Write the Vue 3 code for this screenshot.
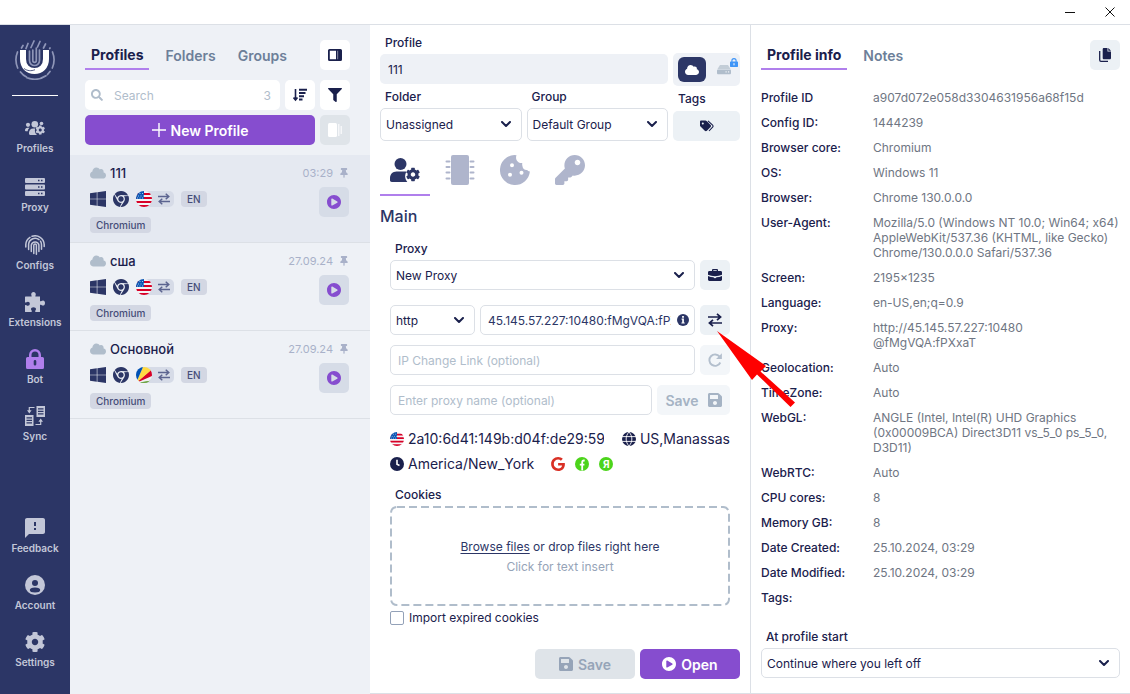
<template>
    <svg class="sprite" aria-hidden="true">
        <symbol id="i-cloud" viewBox="0 32 640 448"><path d="M537.6 226.6c4.1-10.7 6.4-22.4 6.4-34.6 0-53-43-96-96-96-19.7 0-38.1 6-53.3 16.2C367 64.2 315.3 32 256 32c-88.4 0-160 71.6-160 160 0 2.7.1 5.4.2 8.1C40.2 219.8 0 273.2 0 336c0 79.5 64.5 144 144 144h368c70.7 0 128-57.3 128-128 0-61.9-44-113.6-102.4-125.4z" /></symbol>
        <symbol id="i-search" viewBox="0 0 512 512"><path d="M505 442.7L405.3 343c-4.5-4.5-10.6-7-17-7H372c27.6-35.3 44-79.7 44-128C416 93.1 322.9 0 208 0S0 93.1 0 208s93.1 208 208 208c48.3 0 92.7-16.4 128-44v16.3c0 6.4 2.5 12.5 7 17l99.7 99.7c9.4 9.4 24.6 9.4 33.9 0l28.3-28.3c9.4-9.4 9.4-24.6.1-34zM208 336c-70.7 0-128-57.2-128-128 0-70.7 57.2-128 128-128 70.7 0 128 57.2 128 128 0 70.7-57.2 128-128 128z" /></symbol>
        <symbol id="i-filter" viewBox="0 0 512 512"><path d="M487.976 0H24.028C2.71 0-8.047 25.866 7.058 40.971L192 225.941V432c0 7.831 3.821 15.17 10.237 19.662l80 55.98C298.02 518.69 320 507.493 320 487.98V225.941l184.947-184.97C520.021 25.896 509.338 0 487.976 0z" /></symbol>
        <symbol id="i-sort" viewBox="0 0 14 14"><path d="M2.5 1v11M.5 9.5l2 2.5 2-2.5" fill="none" stroke="currentColor" stroke-width="1.6" /><path d="M6 .8h8v2H6zM6 4h6.500v2H6zM6 7.200h5v2H6zM6 10.400h3.500v2H6z" /></symbol>
        <symbol id="i-panel" viewBox="0 0 14 12"><path fill-rule="evenodd" d="M1.500 0h11A1.500 1.500 0 0 1 14 1.500v9a1.500 1.500 0 0 1-1.500 1.500h-11A1.500 1.500 0 0 1 0 10.500v-9A1.500 1.500 0 0 1 1.500 0zM1.800 1.800v8.400H8V1.800z" /><path d="M9 1.800h1.200v8.400H9z" fill="#fff" opacity=".4" /></symbol>
        <symbol id="i-stack" viewBox="0 0 14 14"><rect width="9" height="14" rx="1.500" /><rect x="10" y="1" width="1.500" height="12" opacity=".7" /><rect x="12.500" y="3" width="1.500" height="8" opacity=".7" /></symbol>
        <symbol id="i-plus" viewBox="0 0 14 14"><path d="M7 0v14M0 7h14" stroke="currentColor" stroke-width="1.4" /></symbol>
        <symbol id="i-play" viewBox="8 8 496 496"><path d="M256 8C119 8 8 119 8 256s111 248 248 248 248-111 248-248S393 8 256 8zm115.700 272l-176 101c-15.800 8.800-35.700-2.500-35.700-21V152c0-18.400 19.800-29.800 35.700-21l176 107c16.400 9.200 16.400 32.900 0 42z" /></symbol>
        <symbol id="i-pin" viewBox="0 0 384 512"><path d="M298 214L286 96h42c13 0 24-11 24-24V24c0-13-11-24-24-24H56C43 0 32 11 32 24v48c0 13 11 24 24 24h42L86 214C37 237 0 277 0 328c0 13 11 24 24 24h136v104l25 52c3 6 11 6 14 0l25-52V352h136c13 0 24-11 24-24 0-51-38-91-86-114z" /></symbol>
        <symbol id="i-windows" viewBox="0 32 448 448"><path d="M0 93.700l190-27v181H0V93.700zm0 324.600l190 26V264H0v154.300zm206 28L448 480V264H206v182zm0-380.600v182H448V32L206 65.700z" /></symbol>
        <symbol id="i-chrome" viewBox="0 8 496 496"><path d="M131.5 217.5L55.1 100.1c47.6-59.2 119-91.8 192-92.1 42.3-.3 85.5 10.5 124.8 33.2 43.4 25.2 76.4 61.4 97.4 103L264 133.4c-58.1-3.4-113.4 29.3-132.5 84.1zm32.9 38.5c0 46.2 37.4 83.6 83.6 83.6s83.6-37.4 83.6-83.6-37.4-83.6-83.6-83.6-83.6 37.3-83.6 83.6zm314.9-89.2L339.6 174c37.9 44.3 38.5 108.2 6.6 157.2L234.1 503.6c46.5 2.5 94.4-7.7 137.8-32.9 107.4-62 150.9-192 107.4-303.9zM133.7 303.6L40.4 120.1C14.9 159.1 0 205.9 0 256c0 124 90.8 226.7 209.5 244.9l63.7-124.8c-57.6 10.8-113.2-20.8-139.5-72.5z" /></symbol>
        <symbol id="i-swap" viewBox="0 0 14 14"><path d="M0 4h12M9 .8L12.600 4 9 7.200M14 10H2M5 6.800L1.400 10 5 13.200" fill="none" stroke="currentColor" stroke-width="1.700" /></symbol>
        <symbol id="i-us" viewBox="0 0 16 16"><path fill="#f4f4f6" d="M0 0h16v16H0z" /><path fill="#d80027" d="M0 2h16v2H0zM0 6h16v2H0zM0 10h16v2H0zM0 14h16v2H0z" /><path fill="#0b57b5" d="M0 0h8v8H0z" /><path stroke="#cfe0f2" stroke-dasharray="1 1.500" d="M1 2.500h7M2 5h6M1 7h7" stroke-width=".8" /></symbol>
        <symbol id="i-sc" viewBox="0 0 16 16"><path fill="#6da544" d="M0 16h16v-3z" /><path fill="#f0f0f0" d="M0 16l16-2.500V8z" /><path fill="#6da544" d="M0 16h16v-2.500z" /><path fill="#d80027" d="M0 16L16 9V2z" /><path fill="#ffda44" d="M0 16L16 2.500V0H7z" /><path fill="#0052b4" d="M0 16L7 0H0z" /></symbol>
        <symbol id="i-cog" viewBox="8 8 496 496"><path d="M487.4 315.7l-42.6-24.6c4.3-23.2 4.3-47 0-70.2l42.6-24.6c4.9-2.8 7.1-8.6 5.5-14-11.1-35.6-30-67.8-54.7-94.6-3.8-4.1-10-5.1-14.8-2.3L380.8 110c-17.9-15.400-38.500-27.300-60.800-35.100V25.800c0-5.600-3.900-10.500-9.400-11.700-36.700-8.200-74.300-7.800-109.200 0-5.500 1.200-9.400 6.100-9.400 11.700V75c-22.200 7.900-42.800 19.800-60.800 35.100L88.700 85.500c-4.900-2.800-11-1.900-14.800 2.300-24.700 26.700-43.600 58.900-54.700 94.600-1.700 5.400.6 11.200 5.500 14L67.300 221c-4.300 23.200-4.300 47 0 70.200l-42.600 24.600c-4.900 2.800-7.100 8.600-5.500 14 11.100 35.600 30 67.800 54.700 94.600 3.800 4.100 10 5.100 14.800 2.300l42.600-24.600c17.900 15.400 38.500 27.300 60.800 35.100v49.200c0 5.600 3.900 10.500 9.400 11.700 36.700 8.200 74.300 7.800 109.200 0 5.500-1.200 9.400-6.100 9.400-11.700v-49.200c22.200-7.900 42.800-19.800 60.800-35.100l42.600 24.600c4.900 2.800 11 1.900 14.800-2.300 24.700-26.700 43.600-58.900 54.700-94.600 1.500-5.500-.7-11.300-5.600-14.100zM256 336c-44.100 0-80-35.900-80-80s35.900-80 80-80 80 35.900 80 80-35.900 80-80 80z" /></symbol>
        <symbol id="i-users" viewBox="0 0 20 17"><circle cx="3" cy="3.800" r="2.100" /><circle cx="9.800" cy="3.300" r="3.300" /><circle cx="16.500" cy="2.500" r="1.800" /><path d="M0 9.500C0 7.800 1 6.800 2.500 6.800h2C3.200 8 2.800 9.200 2.700 10.300H.8C.3 10.300 0 10 0 9.500zM4 12c0-2.800 1.600-4.600 4.200-4.600h2c-.8 2.500-.1 4.900 1.800 6.500H5.200C4.400 13.900 4 13.500 4 12.800z" /><use href="#i-cog" x="10.500" y="4.300" width="9.500" height="9.500" /></symbol>
        <symbol id="i-user-cog" viewBox="0 0 30 24"><circle cx="10.500" cy="6" r="6" /><path d="M6.500 13.500h8c.8 0 1.200.1 2 .3-1.800 2.700-2 6.500.8 10.200H1.800C.7 24 0 23.300 0 22.300V20c0-3.700 2.800-6.500 6.500-6.500z" /><use href="#i-cog" x="16" y="9.500" width="14" height="14" /></symbol>
        <symbol id="i-server" viewBox="0 0 20 19"><path fill-rule="evenodd" d="M1 0h18a1 1 0 0 1 1 1v3a1 1 0 0 1-1 1H1a1 1 0 0 1-1-1V1a1 1 0 0 1 1-1zm12 1.800v1.400h1.500V1.800zm3 0v1.400h1.500V1.800zM1 6.500h18a1 1 0 0 1 1 1v3a1 1 0 0 1-1 1H1a1 1 0 0 1-1-1v-3a1 1 0 0 1 1-1zm12 1.800v1.400h1.500V8.300zm3 0v1.400h1.500V8.300zM1 13h18a1 1 0 0 1 1 1v3a1 1 0 0 1-1 1H1a1 1 0 0 1-1-1v-3a1 1 0 0 1 1-1zm12 1.800v1.400h1.500v-1.400zm3 0v1.400h1.500v-1.400z" /></symbol>
        <symbol id="i-finger" viewBox="0 0 20 20"><path fill="none" stroke="currentColor" stroke-width="1.500" stroke-linecap="round" d="M.8 12V9.500A9 9 0 0 1 5 2.300M7 1.300a9.200 9.200 0 0 1 12.200 8.200v2M3.600 14.500V9.800A6.500 6.500 0 0 1 14 4.600M15.500 6.200c.7 1.100 1 2.200 1 3.600v4.500M6.300 16.500V10a3.900 3.900 0 0 1 7.600 0v6.500M8.800 18.500v-8.300a1.300 1.300 0 0 1 2.600 0v9" /></symbol>
        <symbol id="i-puzzle" viewBox="0 0 20 20"><path d="M6.500 4.500C7 4.200 6.200 3.500 6.200 2.300 6.200 1 7.100 0 8.500 0s2.300 1 2.300 2.300c0 1.200-.8 1.900-.3 2.200H15V9c.3.500 1 .4 1.400 0 .5-.4 1-.6 1.600-.6 1.200 0 2 1 2 2.600s-.8 2.600-2 2.600c-.6 0-1.100-.2-1.600-.6-.4-.4-1.100-.5-1.400 0v6.400c0 .4-.2.600-.6.600h-3.900c-.5-.4-.4-1-.1-1.400.4-.5.600-.9.600-1.500 0-1.200-1.100-1.900-2.500-1.900s-2.500.7-2.500 1.900c0 .6.2 1 .6 1.500.3.400.4 1-.1 1.400H.6c-.4 0-.6-.2-.6-.6v-6c.5-.5 1-.4 1.400-.1.500.4.900.5 1.500.5 1.200 0 1.900-.8 1.900-2s-.7-2-1.900-2c-.6 0-1 .2-1.500.5-.4.300-.9.400-1.400-.1V5.100c0-.4.2-.6.600-.6z" /></symbol>
        <symbol id="i-lock" viewBox="0 0 18 20"><path fill-rule="evenodd" d="M1.500 8H3V6a6 6 0 0 1 12 0v2h1.500A1.500 1.500 0 0 1 18 9.500v9a1.500 1.500 0 0 1-1.500 1.500h-15A1.500 1.500 0 0 1 0 18.500v-9A1.500 1.500 0 0 1 1.500 8zM5.500 8h7V6a3.500 3.500 0 0 0-7 0zM9 11a1.300 1.300 0 0 0-1.300 1.300v3a1.300 1.300 0 0 0 2.600 0v-3A1.300 1.300 0 0 0 9 11z" /></symbol>
        <symbol id="i-sync" viewBox="0 0 20 20"><path fill-rule="evenodd" d="M11.500 0H20v11h-8.500zM13 2.300v1.200h5.500V2.300zm0 2.500V6h5.500V4.800zm0 2.500v1.200h5.500V7.300zM0 9h8.500v11H0zm1.500 2.300v1.200H7v-1.200zm0 2.500V15H7v-1.200zm0 2.500v1.200H7v-1.200z" /><path fill="none" stroke="currentColor" stroke-width="1.200" d="M9.500 1.500H4.300V6M10.500 18.500h5.200V14" /><path d="M2 4.200h4.600L4.300 7.500zM13.400 15.800H18l-2.300-3.300z" /></symbol>
        <symbol id="i-feedback" viewBox="2 2 20 20"><path d="M20 2H4c-1.100 0-1.990.9-1.990 2L2 22l4-4h14c1.100 0 2-.9 2-2V4c0-1.100-.9-2-2-2zm-7 12h-2v-2h2v2zm0-4h-2V6h2v4z" /></symbol>
        <symbol id="i-account" viewBox="0 0 20 20"><circle cx="10" cy="10" r="10" /><circle cx="10" cy="8" r="3" fill="#2c3666" /><ellipse cx="10" cy="15" rx="5.200" ry="2.500" fill="#2c3666" /></symbol>
        <symbol id="i-chip" viewBox="0 0 30 30"><rect x="6" width="18" height="30" rx="2" /><path stroke="currentColor" stroke-width="2" stroke-linecap="round" d="M1.500 6.500h3M1.500 12h3M1.500 17.500h3M1.500 23.500h3M25.500 6.500h3M25.500 12h3M25.500 17.500h3M25.500 23.500h3" /></symbol>
        <symbol id="i-cookie" viewBox="0 0 30 30"><path fill-rule="evenodd" d="M14.500 0a15 15 0 1 0 15.400 16.500c-1.500-.2-2.200-.7-2.700-1.500-2.500.3-4.600-1.200-4.700-3.700-.3-.9-.5-2.100-.2-3.300-1.800.3-3.400-.2-4.600-1.500C16.100 5 15.600 2.300 16.500.200zM12 8.200a2 2 0 1 1 0 4 2 2 0 0 1 0-4zm9.500 7.500a2 2 0 1 1 0 4 2 2 0 0 1 0-4zM10 17.800a2 2 0 1 1 0 4 2 2 0 0 1 0-4z" /></symbol>
        <symbol id="i-key" viewBox="0 0 512 512"><path d="M512 176.001C512 273.203 433.202 352 336 352c-11.220 0-22.190-1.062-32.827-3.069l-24.012 27.014A23.999 23.999 0 0 1 261.223 384H224v40c0 13.255-10.745 24-24 24h-40v40c0 13.255-10.745 24-24 24H24c-13.255 0-24-10.745-24-24v-78.059c0-6.365 2.529-12.470 7.029-16.971l161.802-161.802C163.108 213.814 160 195.271 160 176 160 78.798 238.797.001 335.999 0 433.488-.001 512 78.511 512 176.001zM336 128c0 26.510 21.490 48 48 48s48-21.490 48-48-21.490-48-48-48-48 21.490-48 48z" /></symbol>
        <symbol id="i-drive" viewBox="0 0 14 10"><path d="M3 0h8l2.500 4H.5z" opacity=".7" /><path fill-rule="evenodd" d="M1.300 4.600h11.400c.8 0 1.300.5 1.300 1.300v2c0 .8-.5 1.300-1.300 1.300H1.300C.5 9.200 0 8.700 0 7.900v-2c0-.8.500-1.300 1.300-1.300zM8.500 6.300v1.200h1.200V6.300zm2.500 0v1.200h1.200V6.300z" /></symbol>
        <symbol id="i-tags" viewBox="0 0 14 12"><path fill-rule="evenodd" d="M1.200.5h4.300c.4 0 .8.2 1.100.500l4 4c.6.600.6 1.500 0 2.100l-3.700 3.700c-.6.600-1.500.6-2.100 0L.5 6.500C.2 6.200 0 5.800 0 5.400V1.700C0 1 .5.500 1.200.5zM2.800 2.400a1 1 0 1 0 0 2 1 1 0 0 0 0-2z" /><path fill="none" stroke="currentColor" stroke-width="1.100" d="M8 .9l4.600 4.300c.6.600.6 1.300 0 1.900L9 11" /></symbol>
        <symbol id="i-chevron" viewBox="0 0 10 7"><path fill="none" stroke="currentColor" stroke-width="2" stroke-linejoin="round" stroke-linecap="round" d="M1 1l4 4 4-4" /></symbol>
        <symbol id="i-case" viewBox="0 0 14 12"><path fill-rule="evenodd" d="M4 2V1.200C4 .5 4.500 0 5.200 0h3.600c.7 0 1.200.5 1.200 1.200V2h2.600c.8 0 1.400.6 1.400 1.400v2.400c-4 1.900-10 1.900-14 0V3.400C0 2.600.6 2 1.400 2zm1.300 0h3.400v-.7H5.300zM0 7c1.700.8 3.500 1.200 5.500 1.300.2.700.7 1 1.500 1s1.300-.3 1.500-1c2-.1 3.800-.5 5.500-1.300v3.600c0 .8-.6 1.400-1.400 1.400H1.400C.6 12 0 11.400 0 10.600z" /></symbol>
        <symbol id="i-info" viewBox="0 0 12 12"><circle cx="6" cy="6" r="6" /><path fill="#fff" d="M5.100 2h1.800v1.700H5.100zM4.600 4.600h2.300v3.800h.8v1.100H4.400V8.400h.8V5.700h-.6z" /></symbol>
        <symbol id="i-redo" viewBox="0 0 14 14"><path fill="none" stroke="currentColor" stroke-width="1.900" d="M12.300 9.500A5.700 5.700 0 1 1 11.600 3.600" /><path d="M13.900.3v5.800H8.100z" /></symbol>
        <symbol id="i-save" viewBox="0 32 448 448"><path d="M433.941 129.941l-83.882-83.882A48 48 0 0 0 316.118 32H48C21.490 32 0 53.490 0 80v352c0 26.510 21.490 48 48 48h352c26.510 0 48-21.490 48-48V163.882a48 48 0 0 0-14.059-33.941zM224 416c-35.346 0-64-28.654-64-64 0-35.346 28.654-64 64-64s64 28.654 64 64c0 35.346-28.654 64-64 64zm96-304.520V212c0 6.627-5.373 12-12 12H76c-6.627 0-12-5.373-12-12V108c0-6.627 5.373-12 12-12h228.520c3.183 0 6.235 1.264 8.485 3.515l3.480 3.480A11.996 11.996 0 0 1 320 111.480z" /></symbol>
        <symbol id="i-globe" viewBox="0 0 14 14"><circle cx="7" cy="7" r="7" /><path fill="none" stroke="#fff" stroke-width=".9" d="M0 4.600h14M0 9.400h14M7 0C3.200 4 3.200 10 7 14c3.800-4 3.800-10 0-14z" /></symbol>
        <symbol id="i-clock" viewBox="0 0 14 14"><circle cx="7" cy="7" r="7" /><path fill="none" stroke="#fff" stroke-width="1.600" d="M7 2.800v4.500l2.500 1.200" /></symbol>
        <symbol id="i-google" viewBox="0 8 488 496"><path d="M488 261.800C488 403.300 391.100 504 248 504 110.800 504 0 393.200 0 256S110.800 8 248 8c66.800 0 123 24.500 166.300 64.900l-67.500 64.900C258.500 52.600 94.300 116.600 94.300 256c0 86.500 69.100 156.600 153.700 156.600 98.200 0 135-70.400 140.800-106.900H248v-85.300h236.100c2.300 12.700 3.900 24.900 3.900 41.400z" /></symbol>
        <symbol id="i-facebook" viewBox="0 0 14 14"><circle cx="7" cy="7" r="7" /><path fill="none" stroke="#fff" stroke-width="1.800" d="M9.700 3.500H8.800C7.700 3.500 7.200 4 7.200 5v8.500M4.800 7.700h4.600" /></symbol>
        <symbol id="i-copy" viewBox="0 0 12 14"><path d="M5 0h3.500v3.500H12V10c0 .8-.5 1.300-1.300 1.300H5c-.8 0-1.300-.5-1.300-1.300V1.300C3.700.5 4.200 0 5 0zM9.300 0L12 2.700H9.300z" /><path fill="none" stroke="currentColor" stroke-width="1.300" d="M.7 3v9c0 .8.4 1.300 1.300 1.300h7" /></symbol>
        <symbol id="i-logo" viewBox="0 0 40 40">
            <g fill="none" stroke="#8f96b8" stroke-width="1.700" stroke-linecap="round">
                <path d="M2.500 12c-2 5-2 11 .2 16M37.500 12c2 5 2 11-.2 16M5.500 32c1.500 2 3.500 3.800 6 5M12 37.800c6 2.200 13 2 19-2M32.500 34.500l2.500-3M8 5.500L6.500 8M13 3.500L11 8.500M19 1l-3 6.500M25 1.500l-2.500 5.500M30.500 4L28.500 8M35 8l-.3.500" />
                <path d="M14.500 11v9.500a5 5 0 0 0 10 0V10M17.800 10v10.500c0 2.400 3.500 2.400 3.500 0V8" />
            </g>
            <path fill="none" stroke="#fff" stroke-width="6" d="M8 10v9c0 7.500 5 12 11.500 12S31 26.500 31 19v-9" />
            <path fill="none" stroke="#2c3666" stroke-width=".8" d="M9 28.500c3.500 2.500 7 2.800 11 1.200" />
        </symbol>
    </svg>

    <div class="app">
        <header class="titlebar">
            <button aria-label="Minimize">
                <svg class="i10" viewBox="0 0 10 10"><path d="M0 5.500h10" stroke="currentColor" /></svg>
            </button>
            <button aria-label="Close">
                <svg class="i10" viewBox="0 0 10 10"><path d="M.5.5l9 9M9.500.5l-9 9" stroke="currentColor" /></svg>
            </button>
        </header>

        <div class="body">
            <nav class="sidebar">
                <svg class="logo"><use href="#i-logo" /></svg>
                <div class="divider"></div>
                <a v-for="item in navTop" :key="item.label" href="#" class="nav-item" :class="item.icon">
                    <svg class="nav-icon"><use :href="'#i-' + item.icon" /></svg>
                    {{ item.label }}
                </a>
                <div class="spacer"></div>
                <a v-for="item in navBottom" :key="item.label" href="#" class="nav-item">
                    <svg class="nav-icon"><use :href="'#i-' + item.icon" /></svg>
                    {{ item.label }}
                </a>
            </nav>

            <section class="list">
                <div class="list-head">
                    <div class="tabs">
                        <button class="tab active">Profiles</button>
                        <button class="tab">Folders</button>
                        <button class="tab">Groups</button>
                        <div class="spacer"></div>
                        <button class="square white" aria-label="Toggle panel"><svg class="i14"><use href="#i-panel" /></svg></button>
                    </div>
                    <div class="row">
                        <label class="search">
                            <svg class="i12"><use href="#i-search" /></svg>
                            <input v-model="search" type="text" placeholder="Search" aria-label="Search">
                            <span>3</span>
                        </label>
                        <button class="square white" aria-label="Sort"><svg class="i14"><use href="#i-sort" /></svg></button>
                        <button class="square white" aria-label="Filter"><svg class="i14"><use href="#i-filter" /></svg></button>
                    </div>
                    <div class="row">
                        <button class="btn primary grow"><svg class="i14"><use href="#i-plus" /></svg>New Profile</button>
                        <button class="square disabled" aria-label="Bulk create" disabled><svg class="i14"><use href="#i-stack" /></svg></button>
                    </div>
                </div>

                <article v-for="(p, i) in profiles" :key="p.name" class="profile" :class="{ selected: i === 0 }">
                    <div class="profile-top">
                        <svg class="cloud"><use href="#i-cloud" /></svg>
                        <span class="name">{{ p.name }}</span>
                        <span class="date">{{ p.date }}</span>
                        <svg class="pin"><use href="#i-pin" /></svg>
                    </div>
                    <div class="profile-bottom">
                        <div class="marks">
                            <div class="badges">
                                <svg class="i16"><use href="#i-windows" /></svg>
                                <svg class="i16"><use href="#i-chrome" /></svg>
                                <span class="proxy-badge">
                                    <svg class="flag i16"><use :href="'#i-' + p.flag" /></svg>
                                    <svg class="i12"><use href="#i-swap" /></svg>
                                </span>
                                <span class="chip">EN</span>
                            </div>
                            <span class="chip">Chromium</span>
                        </div>
                        <button class="square play" aria-label="Run profile"><svg class="i14"><use href="#i-play" /></svg></button>
                    </div>
                </article>
            </section>

            <main class="editor">
                <div class="top">
                    <div class="top-left">
                        <label class="label" for="profile-name">Profile</label>
                        <input id="profile-name" v-model="profileName" class="name-input" type="text">
                        <div class="pair">
                            <div>
                                <label class="label" for="folder">Folder</label>
                                <div class="select tall">
                                    <select id="folder"><option>Unassigned</option></select>
                                    <svg class="chevron"><use href="#i-chevron" /></svg>
                                </div>
                            </div>
                            <div>
                                <label class="label" for="group">Group</label>
                                <div class="select tall">
                                    <select id="group"><option>Default Group</option></select>
                                    <svg class="chevron"><use href="#i-chevron" /></svg>
                                </div>
                            </div>
                        </div>
                    </div>
                    <div class="top-right">
                        <div class="storage">
                            <button class="storage-on" aria-label="Cloud storage"><svg class="i14"><use href="#i-cloud" /></svg></button>
                            <button class="storage-off" aria-label="Local storage">
                                <svg class="i14"><use href="#i-drive" /></svg>
                                <svg class="lock"><use href="#i-lock" /></svg>
                            </button>
                        </div>
                        <span class="label">Tags</span>
                        <button class="tags" aria-label="Tags"><svg class="i14"><use href="#i-tags" /></svg></button>
                    </div>
                </div>

                <div class="icon-tabs">
                    <button class="active" aria-label="Main"><svg><use href="#i-user-cog" /></svg></button>
                    <button aria-label="Hardware"><svg><use href="#i-chip" /></svg></button>
                    <button aria-label="Cookies"><svg><use href="#i-cookie" /></svg></button>
                    <button aria-label="Passwords"><svg><use href="#i-key" /></svg></button>
                </div>

                <h2>Main</h2>

                <div class="form">
                    <label class="label" for="proxy">Proxy</label>
                    <div class="row gap-below">
                        <div class="select grow">
                            <select id="proxy"><option>New Proxy</option></select>
                            <svg class="chevron"><use href="#i-chevron" /></svg>
                        </div>
                        <button class="square soft" aria-label="Proxy manager"><svg class="i14"><use href="#i-case" /></svg></button>
                    </div>
                    <div class="row">
                        <div class="select protocol">
                            <select aria-label="Protocol"><option>http</option></select>
                            <svg class="chevron"><use href="#i-chevron" /></svg>
                        </div>
                        <div class="field grow address">
                            <input v-model="proxyAddress" type="text" aria-label="Proxy address">
                            <svg class="i12"><use href="#i-info" /></svg>
                        </div>
                        <div class="check">
                            <button class="square soft" aria-label="Check proxy"><svg class="i14"><use href="#i-swap" /></svg></button>
                            <svg class="pointer" viewBox="0 0 78 76">
                                <path d="M0 0L49 35 43.500 40.500 78 71.500 73.500 76 40 43.500 35 49z" fill="#fe0000" />
                            </svg>
                        </div>
                    </div>
                    <div class="row">
                        <div class="field grow"><input type="text" placeholder="IP Change Link (optional)" aria-label="IP Change Link"></div>
                        <button class="square muted" aria-label="Change IP" disabled><svg class="i14"><use href="#i-redo" /></svg></button>
                    </div>
                    <div class="row">
                        <div class="field grow"><input type="text" placeholder="Enter proxy name (optional)" aria-label="Proxy name"></div>
                        <button class="btn save-proxy" disabled>Save<svg class="i14"><use href="#i-save" /></svg></button>
                    </div>

                    <div class="geo">
                        <svg class="flag i14"><use href="#i-us" /></svg>
                        <span class="ip">2a10:6d41:149b:d04f:de29:59</span>
                        <svg class="i14"><use href="#i-globe" /></svg>
                        <span>US,Manassas</span>
                    </div>
                    <div class="geo">
                        <svg class="i14"><use href="#i-clock" /></svg>
                        <span>America/New_York</span>
                        <div class="services">
                            <svg class="i14 google"><use href="#i-google" /></svg>
                            <svg class="i14"><use href="#i-facebook" /></svg>
                            <span class="yandex">Я</span>
                        </div>
                    </div>

                    <span class="label cookies-label">Cookies</span>
                    <div class="dropzone">
                        <svg class="dashes"><rect x="1" y="1" rx="6" /></svg>
                        <p><a href="#">Browse files</a> or drop files right here</p>
                        <p class="hint">Click for text insert</p>
                    </div>
                    <label class="checkbox"><input type="checkbox">Import expired cookies</label>
                </div>

                <div class="actions">
                    <button class="btn save" disabled><svg class="i14"><use href="#i-save" /></svg>Save</button>
                    <button class="btn primary"><svg class="i14"><use href="#i-play" /></svg>Open</button>
                </div>
            </main>

            <aside class="info">
                <div class="tabs">
                    <button class="tab active">Profile info</button>
                    <button class="tab">Notes</button>
                    <div class="spacer"></div>
                    <button class="square soft" aria-label="Copy"><svg class="i14"><use href="#i-copy" /></svg></button>
                </div>
                <dl>
                    <template v-for="row in info" :key="row[0]">
                        <dt>{{ row[0] }}</dt>
                        <dd>{{ row[1] }}</dd>
                    </template>
                </dl>
                <label class="label" for="start">At profile start</label>
                <div class="select">
                    <select id="start"><option>Continue where you left off</option></select>
                    <svg class="chevron"><use href="#i-chevron" /></svg>
                </div>
            </aside>
        </div>
    </div>
</template>

<script setup>
import { ref } from 'vue'

const search = ref('')
const profileName = ref('111')
const proxyAddress = ref('45.145.57.227:10480:fMgVQA:fPXxaT')

const navTop = [
    { label: 'Profiles', icon: 'users' },
    { label: 'Proxy', icon: 'server' },
    { label: 'Configs', icon: 'finger' },
    { label: 'Extensions', icon: 'puzzle' },
    { label: 'Bot', icon: 'lock' },
    { label: 'Sync', icon: 'sync' }
]

const navBottom = [
    { label: 'Feedback', icon: 'feedback' },
    { label: 'Account', icon: 'account' },
    { label: 'Settings', icon: 'cog' }
]

const profiles = [
    { name: '111', date: '03:29', flag: 'us' },
    { name: 'сша', date: '27.09.24', flag: 'us' },
    { name: 'Основной', date: '27.09.24', flag: 'sc' }
]

const info = [
    ['Profile ID', 'a907d072e058d3304631956a68f15d'],
    ['Config ID:', '1444239'],
    ['Browser core:', 'Chromium'],
    ['OS:', 'Windows 11'],
    ['Browser:', 'Chrome 130.0.0.0'],
    ['User-Agent:', 'Mozilla/5.0 (Windows NT 10.0; Win64; x64) AppleWebKit/537.36 (KHTML, like Gecko) Chrome/130.0.0.0 Safari/537.36'],
    ['Screen:', '2195x1235'],
    ['Language:', 'en-US,en;q=0.9'],
    ['Proxy:', 'http://45.145.57.227:10480\n@fMgVQA:fPXxaT'],
    ['Geolocation:', 'Auto'],
    ['TimeZone:', 'Auto'],
    ['WebGL:', 'ANGLE (Intel, Intel(R) UHD Graphics (0x00009BCA) Direct3D11 vs_5_0 ps_5_0, D3D11)'],
    ['WebRTC:', 'Auto'],
    ['CPU cores:', '8'],
    ['Memory GB:', '8'],
    ['Date Created:', '25.10.2024, 03:29'],
    ['Date Modified:', '25.10.2024, 03:29'],
    ['Tags:', '']
]
</script>

<style>
body {
    margin: 0;
    background: #fff;
}
</style>

<style scoped>
* {
    box-sizing: border-box;
}

.app {
    display: flex;
    flex-direction: column;
    min-height: 100vh;
    font-family: Inter, sans-serif;
    font-size: 12px;
    line-height: 15px;
    color: #1a204c;
}

button,
input,
select {
    font: inherit;
    color: inherit;
    border: none;
    padding: 0;
    background: none;
}

svg {
    flex: none;
    display: block;
    fill: currentColor;
}

.sprite {
    position: absolute;
    width: 0;
    height: 0;
}

.i10 { width: 10px; height: 10px; }
.i12 { width: 12px; height: 12px; }
.i14 { width: 14px; height: 14px; }
.i16 { width: 16px; height: 16px; }

.flag {
    border-radius: 50%;
}

.spacer,
.grow {
    flex: 1;
    min-width: 0;
}

.titlebar {
    display: flex;
    justify-content: flex-end;
    height: 25px;
    color: #111;
    border-bottom: 1px solid #dce0e6;
}

.titlebar button {
    display: flex;
    align-items: center;
    justify-content: center;
    width: 40px;
}

.body {
    flex: 1;
    display: grid;
    grid-template-columns: 70px 300px minmax(0, 1fr) minmax(0, 1fr);
}

.sidebar {
    display: flex;
    flex-direction: column;
    align-items: center;
    padding: 15px 0 5px;
    background: #2c3666;
}

.logo {
    width: 40px;
    height: 40px;
}

.divider {
    width: 46px;
    height: 1px;
    margin: 15px 0 25px;
    background: #fff;
}

.nav-item {
    display: flex;
    flex-direction: column;
    align-items: center;
    gap: 3px;
    height: 57px;
    font-size: 10px;
    font-weight: 600;
    color: #c3c7d8;
    text-decoration: none;
}

.nav-icon {
    width: 20px;
    height: 20px;
}

.users .nav-icon { height: 17px; }
.server .nav-icon { height: 19px; }
.lock .nav-icon { color: #b07fec; }

.list {
    background: #eef1f6;
}

.list-head {
    display: flex;
    flex-direction: column;
    gap: 5px;
    padding: 15px 20px 10px 15px;
}

.tabs {
    display: flex;
    gap: 10px;
    height: 30px;
}

.list-head .tabs {
    margin-bottom: 5px;
}

.tab {
    padding: 3px 6px 0;
    border-bottom: 2px solid transparent;
    font-size: 14px;
    font-weight: 600;
    color: #6d7f99;
}

.tab.active {
    padding-top: 1px;
    border-color: #b07fec;
    font-weight: 700;
    color: #1a204c;
}

.row {
    display: flex;
    gap: 5px;
}

.square {
    display: flex;
    align-items: center;
    justify-content: center;
    flex: none;
    width: 30px;
    height: 30px;
    border-radius: 5px;
}

.white { background: #fff; }
.disabled { background: #dfe4e9; color: #fff; }
.soft { background: #ecf1f5; }
.muted { background: #f3f6f9; color: #b3bfcd; }

.search {
    display: flex;
    flex: 1;
    align-items: center;
    min-width: 0;
    padding: 0 9px 0 6px;
    border-radius: 5px;
    background: #fff;
    color: #b0bdcb;
}

.search input {
    flex: 1;
    min-width: 0;
    padding: 0 11px;
    outline: none;
}

input::placeholder {
    color: #b0bdcb;
    opacity: 1;
}

.btn {
    display: flex;
    align-items: center;
    justify-content: center;
    gap: 5px;
    height: 30px;
    border-radius: 5px;
    font-size: 14px;
    font-weight: 600;
}

.primary {
    background: #864dcf;
    color: #fff;
}

.profile {
    height: 88px;
    padding: 10px 21px 0 20px;
    border-bottom: 1px solid #dce0e6;
}

.profile.selected {
    background: #e5e9f1;
}

.profile-top {
    display: flex;
    align-items: center;
    height: 16px;
}

.cloud {
    width: 16px;
    height: 12px;
    color: #b0bdcb;
}

.name {
    flex: 1;
    margin-left: 4px;
    font-size: 13px;
    font-weight: 500;
}

.date {
    font-size: 11px;
    color: #a9b1c9;
}

.pin {
    width: 8px;
    height: 10px;
    margin-left: 7px;
    margin-right: 1px;
    color: #a9b1c9;
}

.profile-bottom {
    display: flex;
    justify-content: space-between;
    padding-top: 6px;
}

.marks {
    display: flex;
    flex-direction: column;
    align-items: flex-start;
    gap: 10px;
    padding-top: 4px;
    color: #2c3666;
}

.badges {
    display: flex;
    gap: 7px;
}

.proxy-badge {
    display: flex;
    align-items: center;
    gap: 6px;
    padding-right: 4px;
    border-radius: 8px 5px 5px 8px;
    background: #d6dbe7;
    color: #5c6490;
}

.chip {
    height: 16px;
    padding: 0 6px;
    border-radius: 4px;
    background: #d3d7e3;
    font-size: 10px;
    font-weight: 500;
    line-height: 16px;
    color: #454d79;
}

.play {
    background: #d6dce7;
    color: #864dcf;
}

.editor {
    display: flex;
    flex-direction: column;
    padding: 10px 10px 14px;
    border-bottom: 1px solid #dce0e6;
}

.label {
    display: block;
    margin-left: 5px;
    font-weight: 500;
    line-height: 16px;
}

.top {
    display: grid;
    grid-template-columns: minmax(0, 1fr) 67px;
    gap: 5px;
}

.name-input {
    display: block;
    width: 100%;
    height: 30px;
    margin: 3px 0 5px;
    padding: 0 8px;
    border-radius: 5px;
    background: #eef1f6;
}

.pair {
    display: grid;
    grid-template-columns: 1fr 1fr;
    gap: 5px;
}

.pair .label {
    margin-bottom: 3px;
}

.select {
    display: grid;
    align-items: center;
    height: 30px;
}

.select.tall {
    height: 33px;
}

.select select {
    grid-area: 1 / 1;
    width: 100%;
    height: 100%;
    padding: 0 24px 0 5px;
    appearance: none;
    border: 1px solid #dce0e6;
    border-radius: 5px;
    background: #fff;
}

.chevron {
    grid-area: 1 / 1;
    justify-self: end;
    width: 10px;
    height: 7px;
    margin-right: 11px;
    pointer-events: none;
}

.top-right {
    display: flex;
    flex-direction: column;
    padding-top: 18px;
}

.top-right .label {
    margin: 5px 0 4px 5px;
}

.storage {
    display: flex;
    align-items: center;
    justify-content: space-between;
    height: 33px;
    padding: 0 2px 0 5px;
    border-radius: 5px;
    background: #eef1f6;
}

.storage-on {
    display: flex;
    align-items: center;
    justify-content: center;
    width: 28px;
    height: 25px;
    border-radius: 6px;
    background: #2c3666;
    color: #fff;
}

.storage-off {
    position: relative;
    display: flex;
    align-items: center;
    width: 21px;
    height: 25px;
    color: #b0bdcb;
}

.storage-off .lock {
    position: absolute;
    top: 1px;
    right: 0;
    width: 8px;
    height: 9px;
    color: #3f95f7;
}

.tags {
    display: flex;
    align-items: center;
    justify-content: center;
    height: 30px;
    border-radius: 5px;
    background: #ecf1f5;
}

.icon-tabs {
    display: flex;
    gap: 5px;
    margin-top: 5px;
}

.icon-tabs button {
    display: flex;
    align-items: center;
    justify-content: center;
    width: 50px;
    height: 50px;
    border-bottom: 2px solid transparent;
    color: #afb5cc;
}

.icon-tabs .active {
    border-color: #b07fec;
    color: #2c3666;
}

.icon-tabs svg {
    width: 30px;
    height: 30px;
}

h2 {
    margin: 10px 0 15px;
    font-size: 16px;
    font-weight: 500;
    line-height: 20px;
    color: #2c3666;
}

.form {
    display: flex;
    flex-direction: column;
    padding: 0 10px;
}

.form > .label {
    margin-bottom: 3px;
}

.form .row {
    margin-bottom: 10px;
}

.form .gap-below {
    margin-bottom: 15px;
}

.protocol {
    width: 85px;
}

.field {
    display: flex;
    align-items: center;
    height: 30px;
    padding: 0 5px 0 7px;
    border: 1px solid #dce0e6;
    border-radius: 5px;
}

.field input {
    flex: 1;
    width: 100%;
    min-width: 0;
    outline: none;
}

.address {
    gap: 6px;
    color: #2c3666;
}

.check {
    position: relative;
}

.pointer {
    position: absolute;
    z-index: 5;
    top: 26px;
    left: 17px;
    width: 78px;
    height: 76px;
    pointer-events: none;
}

.save-proxy {
    gap: 9px;
    width: 73px;
    background: #f3f6f9;
    color: #a5b3c4;
}

.geo {
    display: flex;
    align-items: center;
    gap: 4px;
    height: 25px;
    font-size: 14px;
}

.ip {
    flex: 1;
    min-width: 0;
    margin-right: 14px;
    overflow: hidden;
    white-space: nowrap;
}

.row + .geo {
    margin-top: 1px;
}

.services {
    display: flex;
    gap: 10px;
    margin-left: 13px;
    color: #4cd41b;
}

.google {
    color: #d93025;
}

.yandex {
    width: 14px;
    height: 14px;
    border-radius: 50%;
    background: #4cd41b;
    color: #fff;
    font-size: 10px;
    font-weight: 700;
    line-height: 14px;
    text-align: center;
}

.form .cookies-label {
    margin-top: 11px;
}

.dropzone {
    position: relative;
    display: flex;
    flex-direction: column;
    align-items: center;
    justify-content: center;
    gap: 5px;
    height: 100px;
}

.dashes {
    position: absolute;
    inset: 0;
    width: 100%;
    height: 100%;
    fill: none;
    stroke: #b0bdcb;
    stroke-width: 2px;
    stroke-dasharray: 8 4;
}

.dashes rect {
    width: calc(100% - 2px);
    height: calc(100% - 2px);
}

.dropzone p {
    position: relative;
    margin: 0;
    color: #2c3666;
}

.dropzone a {
    color: inherit;
    text-underline-offset: 2px;
}

.dropzone .hint {
    color: #96a4b8;
}

.checkbox {
    display: flex;
    align-items: center;
    gap: 5px;
    margin-top: 4px;
}

.checkbox input {
    appearance: none;
    width: 14px;
    height: 14px;
    margin: 0;
    border: 1px solid #93a1b8;
    border-radius: 2px;
}

.actions {
    display: flex;
    justify-content: flex-end;
    gap: 5px;
    margin-top: auto;
}

.actions .btn {
    width: 100px;
}

.save {
    background: #dfe4e9;
    color: #96a4b8;
}

.info {
    padding: 15px 10px 14px;
    border-left: 1px solid #dce0e6;
    border-bottom: 1px solid #dce0e6;
}

dl {
    display: grid;
    grid-template-columns: 112px minmax(0, 1fr);
    gap: 10px 0;
    margin: 20px 0 24px;
}

dt {
    font-weight: 500;
}

dd {
    margin: 0;
    white-space: pre-line;
    color: #6f7683;
}

.info .label {
    margin-bottom: 3px;
}
</style>
